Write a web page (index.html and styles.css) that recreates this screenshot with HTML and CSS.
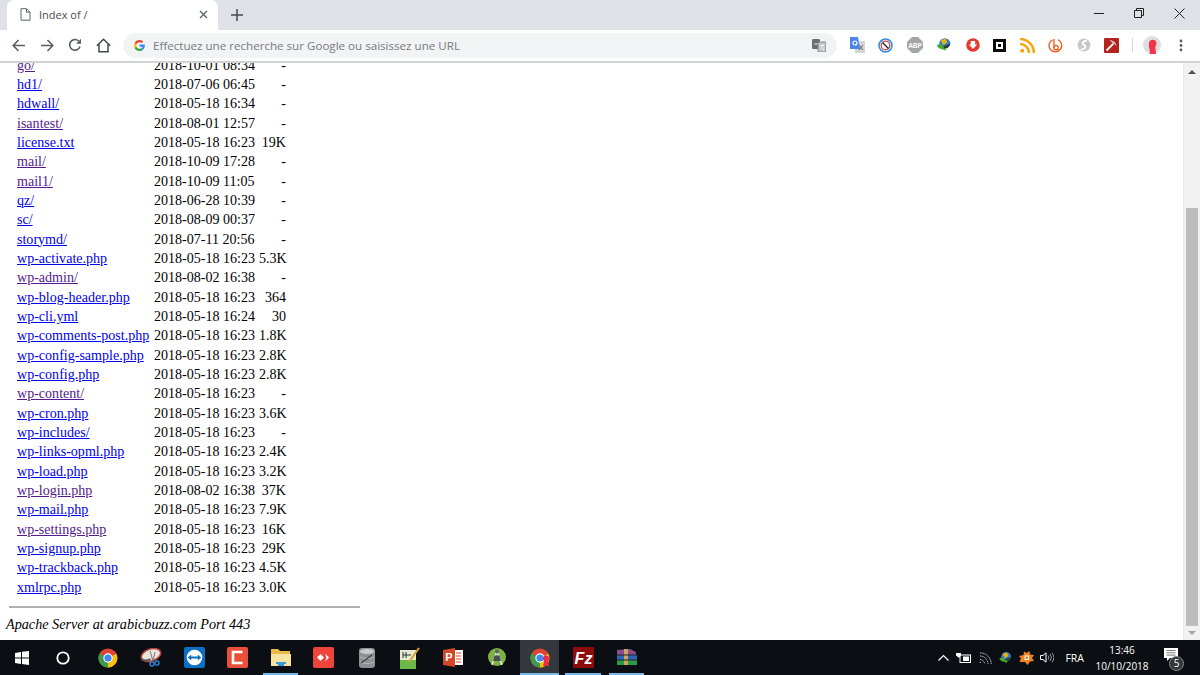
FILE: index.html
```html
<!DOCTYPE html>
<html lang="fr">
<head>
    <meta charset="UTF-8">
    <title>Index of /</title>
    <link rel="stylesheet" href="styles.css">
</head>
<body>
    <svg class="defs" width="0" height="0">
        <symbol id="chrome" viewBox="0 0 24 24">
            <circle cx="12" cy="12" r="11.5" fill="#db4437"/>
            <path d="M12 12 L22 7 A11.5 11.5 0 0 1 12 23.5 Z" fill="#f4c20d"/>
            <path d="M12 12 L12 23.5 A11.5 11.5 0 0 1 2.1 6.2 Z" fill="#3c9a4b"/>
            <circle cx="12" cy="12" r="5.6" fill="#fff"/>
            <circle cx="12" cy="12" r="4.3" fill="#4285f4"/>
        </symbol>
        <symbol id="globe" viewBox="0 0 20 20">
            <ellipse cx="11" cy="8" rx="7" ry="6.5" fill="#2f7fd0"/>
            <path d="M6 4 L12 2 L14 7 L9 10 Z" fill="#f0b400"/>
            <path d="M1 11 C4 8 7 9 9 12 L14 10 L12 17 L7 15 C5 15 3 14 1 11 Z" fill="#49a82e"/>
            <path d="M9 12 L18 8 L15 13 L11 14 Z" fill="#2c3b1c"/>
        </symbol>
    </svg>

    <header class="titlebar">
        <div class="tab">
            <svg class="tab-page" width="11" height="13" viewBox="0 0 11 13"><path d="M1 .7h5.5L10 4.2v8H1z M6.5 .7v3.5H10" fill="none" stroke="#5f6368"/></svg>
            <span class="tab-title">Index of /</span>
            <svg class="tab-close" width="9" height="9" viewBox="0 0 9 9"><path d="M1 1l7 7M8 1L1 8" stroke="#5f6368" stroke-width="1.4"/></svg>
        </div>
        <svg class="new-tab" width="12" height="12" viewBox="0 0 12 12"><path d="M6 0v12M0 6h12" stroke="#45494e" stroke-width="1.5"/></svg>
        <div class="window-buttons">
            <svg width="10" height="10" viewBox="0 0 10 10"><path d="M0 5.5h10" stroke="#222"/></svg>
            <svg width="10" height="10" viewBox="0 0 10 10"><path d="M.5 2.5h7v7h-7z M2.5 2.5v-2h7v7h-2" fill="none" stroke="#222"/></svg>
            <svg width="11" height="11" viewBox="0 0 11 11"><path d="M.5 .5l10 10M10.5 .5l-10 10" stroke="#222"/></svg>
        </div>
    </header>

    <nav class="toolbar">
        <div class="nav-buttons">
            <svg width="14" height="13" viewBox="0 0 14 13"><path d="M13 6.5H1.5M6.5 1L1.2 6.5 6.5 12" fill="none" stroke="#5a5e63" stroke-width="1.6"/></svg>
            <svg width="14" height="13" viewBox="0 0 14 13"><path d="M1 6.5h11.5M7.5 1l5.3 5.5L7.5 12" fill="none" stroke="#5a5e63" stroke-width="1.6"/></svg>
            <svg width="14" height="14" viewBox="0 0 14 14"><path d="M12 8.5A5.3 5.3 0 1 1 10.6 3" fill="none" stroke="#5a5e63" stroke-width="1.6"/><path d="M13 .8v4.9H8.1z" fill="#5a5e63"/></svg>
            <svg width="15" height="15" viewBox="0 0 15 15"><path d="M.8 7.8L7.5 1.2l6.7 6.6M3 6.2v7.6h9V6.2" fill="none" stroke="#45494e" stroke-width="1.5"/></svg>
        </div>
        <div class="omnibox">
            <svg class="g-logo" width="11" height="11" viewBox="0 0 24 24">
                <path d="M23.5 12.3c0-.9-.1-1.600-.2-2.300H12v4.500h6.500c-.3 1.500-1.100 2.700-2.400 3.500l3.700 2.900c2.200-2 3.700-5 3.700-8.600z" fill="#4285f4"/>
                <path d="M12 24c3.200 0 6-1.100 7.900-2.900l-3.800-2.900c-1 .7-2.400 1.100-4.100 1.100-3.200 0-5.800-2.100-6.800-5l-3.900 3C3.300 21.300 7.300 24 12 24z" fill="#34a853"/>
                <path d="M5.200 14.300a7.200 7.200 0 0 1 0-4.600l-3.900-3a12 12 0 0 0 0 10.600z" fill="#fbbc05"/>
                <path d="M12 4.700c1.800 0 3.300.6 4.600 1.800l3.400-3.400C17.900 1.200 15.200 0 12 0 7.300 0 3.300 2.700 1.300 6.700l3.900 3c1-2.900 3.600-5 6.800-5z" fill="#ea4335"/>
            </svg>
            <span class="omnibox-text">Effectuez une recherche sur Google ou saisissez une URL</span>
            <svg class="translate" width="14" height="13" viewBox="0 0 14 13"><rect width="8" height="10" rx="1" fill="#6b6f73"/><rect x="6" y="3" width="8" height="10" rx="1" fill="#c8cacc" stroke="#6b6f73" stroke-width=".8"/><path d="M2.500 5h3M8.500 6.500h3.500M10 8.500l1.500 2" stroke="#fff"/></svg>
        </div>
        <div class="extensions">
            <svg width="15" height="16" viewBox="0 0 15 16"><rect x="5" y="4" width="10" height="12" fill="#d4d5d6"/><path d="M9 8l4 5M13 8l-4 5" stroke="#666"/><path d="M0 0h8l2 12H0z" fill="#4a86e8"/><circle cx="5" cy="6" r="2" fill="none" stroke="#fff" stroke-width="1.200"/></svg>
            <svg width="15" height="15" viewBox="0 0 15 15"><circle cx="7.500" cy="7.500" r="6.500" fill="#fff" stroke="#2f8fe0" stroke-width="1.600"/><circle cx="7.500" cy="7.500" r="4.300" fill="none" stroke="#d0433b" stroke-width="1.300"/><path d="M4.500 4.500l6 6" stroke="#333" stroke-width="1.500"/></svg>
            <svg width="16" height="16" viewBox="0 0 16 16"><path d="M5 0h6l5 5v6l-5 5H5l-5-5V5z" fill="#a3a5a8"/><text x="8" y="10.500" class="abp-text">ABP</text></svg>
            <svg width="16" height="16"><use href="#globe"/></svg>
            <svg width="14" height="14" viewBox="0 0 14 14"><circle cx="7" cy="7" r="6.800" fill="#e23a2e"/><path d="M4.800 3h4.400v3.500h2L7 11 2.800 6.500h2z" fill="#fff"/></svg>
            <svg width="13" height="13" viewBox="0 0 13 13"><rect width="13" height="13" fill="#0b0b0b"/><rect x="3" y="3" width="7" height="7" fill="#fff"/><rect x="5" y="5" width="3" height="3" fill="#0b0b0b"/></svg>
            <svg width="15" height="15" viewBox="0 0 15 15"><circle cx="2.200" cy="12.800" r="2" fill="#f4a70e"/><path d="M0 6a9 9 0 0 1 9 9M0 1a14 14 0 0 1 14 14" fill="none" stroke="#f4a70e" stroke-width="2.600"/></svg>
            <svg width="15" height="15" viewBox="0 0 15 15"><path d="M4.500 1.800A6.300 6.300 0 1 0 10 1.700" fill="none" stroke="#ee6123" stroke-width="1.400"/><path d="M6 1v9" stroke="#ee6123" stroke-width="1.400"/><circle cx="8" cy="9.500" r="2.200" fill="none" stroke="#ee6123" stroke-width="1.300"/></svg>
            <svg width="14" height="14" viewBox="0 0 14 14"><circle cx="7" cy="7" r="6.500" fill="#c6c7c9"/><path d="M10 2.500C6 3 4 5.500 7 7s1 4.500-3 4.500" fill="none" stroke="#fff" stroke-width="1.800"/></svg>
            <svg width="15" height="15" viewBox="0 0 15 15"><rect width="15" height="15" rx="1" fill="#b3241e"/><path d="M2.500 12.500l7-7" stroke="#fff" stroke-width="1.800"/><path d="M5.500 2.500c3.500-.5 6.500 2 7 5.500L10.500 5.500z" fill="#fff"/></svg>
        </div>
        <span class="toolbar-divider"></span>
        <svg class="avatar" width="18" height="18" viewBox="0 0 18 18"><circle cx="9" cy="9" r="9" fill="#dddee0"/><path d="M6 7a3.800 3.800 0 0 1 7.500 0c0 2-1 3-1.200 4.500L13 18H6.500c.6-2 .5-4-.3-6C5.500 10.500 6 8.500 6 7z" fill="#f0344b"/></svg>
        <svg class="menu-dots" width="4" height="13" viewBox="0 0 4 13"><circle cx="2" cy="2" r="1.400" fill="#5a5e63"/><circle cx="2" cy="6.500" r="1.400" fill="#5a5e63"/><circle cx="2" cy="11" r="1.400" fill="#5a5e63"/></svg>
    </nav>

    <main class="viewport">
        <div class="page">
            <div class="listing">
                <div class="row"><a class="seen" href="#">go/</a><span>2018-10-01 08:34</span><span class="size">-</span></div>
                <div class="row"><a href="#">hd1/</a><span>2018-07-06 06:45</span><span class="size">-</span></div>
                <div class="row"><a href="#">hdwall/</a><span>2018-05-18 16:34</span><span class="size">-</span></div>
                <div class="row"><a class="seen" href="#">isantest/</a><span>2018-08-01 12:57</span><span class="size">-</span></div>
                <div class="row"><a href="#">license.txt</a><span>2018-05-18 16:23</span><span class="size">19K</span></div>
                <div class="row"><a class="seen" href="#">mail/</a><span>2018-10-09 17:28</span><span class="size">-</span></div>
                <div class="row"><a class="seen" href="#">mail1/</a><span>2018-10-09 11:05</span><span class="size">-</span></div>
                <div class="row"><a href="#">qz/</a><span>2018-06-28 10:39</span><span class="size">-</span></div>
                <div class="row"><a href="#">sc/</a><span>2018-08-09 00:37</span><span class="size">-</span></div>
                <div class="row"><a href="#">storymd/</a><span>2018-07-11 20:56</span><span class="size">-</span></div>
                <div class="row"><a href="#">wp-activate.php</a><span>2018-05-18 16:23</span><span class="size">5.3K</span></div>
                <div class="row"><a class="seen" href="#">wp-admin/</a><span>2018-08-02 16:38</span><span class="size">-</span></div>
                <div class="row"><a href="#">wp-blog-header.php</a><span>2018-05-18 16:23</span><span class="size">364</span></div>
                <div class="row"><a href="#">wp-cli.yml</a><span>2018-05-18 16:24</span><span class="size">30</span></div>
                <div class="row"><a href="#">wp-comments-post.php</a><span>2018-05-18 16:23</span><span class="size">1.8K</span></div>
                <div class="row"><a href="#">wp-config-sample.php</a><span>2018-05-18 16:23</span><span class="size">2.8K</span></div>
                <div class="row"><a href="#">wp-config.php</a><span>2018-05-18 16:23</span><span class="size">2.8K</span></div>
                <div class="row"><a class="seen" href="#">wp-content/</a><span>2018-05-18 16:23</span><span class="size">-</span></div>
                <div class="row"><a href="#">wp-cron.php</a><span>2018-05-18 16:23</span><span class="size">3.6K</span></div>
                <div class="row"><a href="#">wp-includes/</a><span>2018-05-18 16:23</span><span class="size">-</span></div>
                <div class="row"><a href="#">wp-links-opml.php</a><span>2018-05-18 16:23</span><span class="size">2.4K</span></div>
                <div class="row"><a href="#">wp-load.php</a><span>2018-05-18 16:23</span><span class="size">3.2K</span></div>
                <div class="row"><a class="seen" href="#">wp-login.php</a><span>2018-08-02 16:38</span><span class="size">37K</span></div>
                <div class="row"><a href="#">wp-mail.php</a><span>2018-05-18 16:23</span><span class="size">7.9K</span></div>
                <div class="row"><a class="seen" href="#">wp-settings.php</a><span>2018-05-18 16:23</span><span class="size">16K</span></div>
                <div class="row"><a href="#">wp-signup.php</a><span>2018-05-18 16:23</span><span class="size">29K</span></div>
                <div class="row"><a href="#">wp-trackback.php</a><span>2018-05-18 16:23</span><span class="size">4.5K</span></div>
                <div class="row"><a href="#">xmlrpc.php</a><span>2018-05-18 16:23</span><span class="size">3.0K</span></div>
            </div>
            <hr class="rule">
            <address class="signature">Apache Server at arabicbuzz.com Port 443</address>
        </div>
        <div class="scrollbar">
            <span class="arrow-up"></span>
            <span class="thumb"></span>
            <span class="arrow-down"></span>
        </div>
    </main>

    <footer class="taskbar">
        <div class="task">
            <svg width="14" height="14" viewBox="0 0 14 14"><path d="M0 2l6-1v5.500H0zM7 .8L14 0v6.500H7zM0 7.500h6V13l-6-1zM7 7.500h7V14l-7-1z" fill="#fff"/></svg>
        </div>
        <div class="task">
            <svg class="cortana" width="14" height="14" viewBox="0 0 14 14"><circle cx="7" cy="7" r="5.700" fill="none" stroke="#fff" stroke-width="1.800"/></svg>
        </div>
        <div class="task"><svg width="20" height="20"><use href="#chrome"/></svg></div>
        <div class="task">
            <svg width="22" height="20" viewBox="0 0 22 20"><ellipse cx="11" cy="7" rx="10" ry="6" transform="rotate(-18 11 7)" fill="#e9e4dc" stroke="#b5413a" stroke-width="1.500"/><path d="M1.500 11c2 2 6 2 9 0" stroke="#555" stroke-width="2" fill="none"/><path d="M10 3l3 10M15 4l-2 9" stroke="#777"/><circle cx="12" cy="16" r="2" fill="none" stroke="#2b7fd0" stroke-width="1.500"/><circle cx="17" cy="15" r="2" fill="none" stroke="#2b7fd0" stroke-width="1.500"/></svg>
        </div>
        <div class="task">
            <svg width="21" height="21" viewBox="0 0 21 21"><rect width="21" height="21" rx="2" fill="#0c6fc4"/><circle cx="10.500" cy="10.500" r="7.800" fill="#fff"/><path d="M3.800 10.500l3.400-3v2h6.600v-2l3.400 3-3.400 3v-2H7.200v2z" fill="#0c6fc4"/></svg>
        </div>
        <div class="task">
            <svg width="21" height="21" viewBox="0 0 21 21"><rect width="21" height="21" rx="2" fill="#e8503a"/><path d="M15.500 5H6v11h9.500" fill="none" stroke="#fff" stroke-width="2.600"/></svg>
        </div>
        <div class="task task-open">
            <svg width="20" height="19" viewBox="0 0 20 19"><path d="M0 1h7l2 2h10v15H0z" fill="#e9b949"/><rect x="0" y="6" width="20" height="12" fill="#f6e3a0"/><path d="M7 18v-4h6v4z" fill="#3b9ad9"/><path d="M5 14h10v2H5z" fill="#3b9ad9"/></svg>
        </div>
        <div class="task">
            <svg width="21" height="21" viewBox="0 0 21 21"><rect width="21" height="21" rx="2" fill="#ef443b"/><path d="M7.500 7l3.500 3.500L7.500 14 4 10.500z" fill="#fff"/><path d="M12 6.500l4 4-4 4 1.500-4z" fill="#fff"/></svg>
        </div>
        <div class="task">
            <svg width="16" height="20" viewBox="0 0 16 20"><rect width="16" height="20" rx="3" fill="#8e9193"/><ellipse cx="8" cy="3.500" rx="7" ry="2.500" fill="#c9cbcc"/><path d="M1 9c4 2 10 2 14 0M1 14c4 2 10 2 14 0" fill="none" stroke="#b9bbbc"/><path d="M2 15L13 7" stroke="#3d4042" stroke-width="1.300"/></svg>
        </div>
        <div class="task">
            <svg width="20" height="22" viewBox="0 0 20 22"><rect y="3" width="16" height="19" fill="#e4ebd0"/><rect y="13" width="16" height="9" fill="#6ab845"/><path d="M3 5v6M6 5v6M3 8h8" stroke="#333"/><path d="M9 15L19 1" stroke="#e0a030" stroke-width="2"/></svg>
        </div>
        <div class="task">
            <svg width="20" height="19" viewBox="0 0 20 19"><rect x="8" y="2" width="12" height="15" fill="#fff"/><path d="M13 5h5M13 8h5M13 11h5M13 14h5" stroke="#d24726"/><path d="M0 2l12-2v19L0 17z" fill="#d24726"/><text x="6" y="13" class="ppt-text">P</text></svg>
        </div>
        <div class="task">
            <svg width="18" height="20" viewBox="0 0 18 20"><circle cx="9" cy="9" r="9" fill="#7cb342"/><path d="M9 3l5 14M9 3L4 17" stroke="#e8ecef" stroke-width="1.500"/><path d="M6.500 7.500h5L13 13H5z" fill="#4a4f52"/><circle cx="9" cy="3.500" r="2" fill="#5d6366"/></svg>
        </div>
        <div class="task task-active">
            <svg width="20" height="20"><use href="#chrome"/></svg>
            <svg class="chrome-badge" width="8" height="11" viewBox="0 0 8 11"><path d="M1 3.500a3 3 0 0 1 6 0c0 1.500-1 2-1 3.500l1 4H1l1-4C2 5.500 1 5 1 3.500z" fill="#f0294a"/></svg>
        </div>
        <div class="task task-open">
            <svg width="21" height="21" viewBox="0 0 21 21"><rect width="21" height="21" fill="#8f0b0b"/><text x="10.500" y="16.500" class="fz-text">Fz</text></svg>
        </div>
        <div class="task task-open">
            <svg width="21" height="17" viewBox="0 0 21 17"><path d="M1 1l13-1 6 3v3H1z" fill="#8b4a8c"/><path d="M1 6h20v5H1z" fill="#2b66b8"/><path d="M1 11h20v5H1z" fill="#2c9a4b"/><path d="M8 0h4v16H8z" fill="#c9a75e"/><path d="M1 6h20M1 11h20" stroke="#222"/></svg>
        </div>

        <div class="tray">
            <svg class="tray-icon tray-chevron" width="11" height="7" viewBox="0 0 11 7"><path d="M.5 6.500l5-5 5 5" fill="none" stroke="#fff" stroke-width="1.200"/></svg>
            <svg class="tray-icon tray-battery" width="15" height="11" viewBox="0 0 15 11"><rect x="4" y="3" width="10.500" height="7.500" fill="none" stroke="#fff"/><rect x="7" y="4.500" width="6" height="4.500" fill="#fff"/><path d="M0 1h5v2.500L3.500 5.500h-1L0 3.500z" fill="#fff"/></svg>
            <svg class="tray-icon" width="13" height="12" viewBox="0 0 13 12"><path d="M1 11a1 1 0 0 1 1-1M1 7.500A4.500 4.500 0 0 1 5.500 12M1 4a8 8 0 0 1 8 8M1 .8A11.200 11.200 0 0 1 12.200 12" fill="none" stroke="#ccc" stroke-dasharray="1.500 .8"/></svg>
            <svg class="tray-icon" width="15" height="14"><use href="#globe"/></svg>
            <svg class="tray-icon" width="15" height="14" viewBox="0 0 15 14"><path d="M7.500 2l3-2 .5 3.500 4 .5-2 3 2 3-4 .5-2.500 3.500-2.500-3L.5 11l1.500-3.500L0 5l4.500-1L5 .5z" fill="#f5811f"/><rect x="6" y="5" width="3.500" height="3.500" fill="none" stroke="#fff"/></svg>
            <svg class="tray-icon" width="14" height="11" viewBox="0 0 14 11"><path d="M.5 3.500h2.500L6 .8v9.400L3 7.500H.5z" fill="none" stroke="#fff"/><path d="M8 3.500a3 3 0 0 1 0 4M10 2a5.500 5.500 0 0 1 0 7M12 .8a7.500 7.500 0 0 1 0 9.400" fill="none" stroke="#bbb" stroke-width=".8"/></svg>
            <span class="tray-lang">FRA</span>
            <div class="tray-clock">
                <span>13:46</span>
                <span>10/10/2018</span>
            </div>
            <div class="notify">
                <svg width="14" height="14" viewBox="0 0 14 14"><path d="M0 0h14v10H6L3 13v-3H0z" fill="#fff"/><path d="M2.500 2.500h9M2.500 4.800h9M2.500 7.100h9" stroke="#555" stroke-width=".8"/></svg>
                <span class="notify-badge">5</span>
            </div>
        </div>
    </footer>
</body>
</html>
```

FILE: styles.css
```css
* {
    box-sizing: border-box;
}

html, body {
    height: 100%;
}

body {
    margin: 0;
    display: flex;
    flex-direction: column;
    height: 675px;
    overflow: hidden;
    background: white;
    font-family: "Liberation Serif", serif;
}

.defs {
    position: absolute;
}

/* browser chrome */
.titlebar {
    display: flex;
    align-items: flex-end;
    height: 30px;
    padding-left: 7px;
    background: #dee1e6;
}

.tab {
    display: flex;
    align-items: center;
    width: 211px;
    height: 30px;
    padding: 0 10px 2px 13px;
    background: white;
    border-radius: 7px 7px 0 0;
}

.tab-title {
    flex: 1;
    margin-left: 8px;
    font-family: "Open Sans", sans-serif;
    font-size: 11px;
    color: #4a4d51;
}

.new-tab {
    margin: 0 0 9px 13px;
}

.window-buttons {
    display: flex;
    align-items: center;
    gap: 30px;
    margin-left: auto;
    height: 26px;
    padding-right: 15px;
    align-self: flex-start;
}

.toolbar {
    display: flex;
    align-items: center;
    height: 33px;
    padding: 0 0 1px 12px;
    background: white;
    border-bottom: 2px solid #d2d3d5;
}

.nav-buttons {
    display: flex;
    align-items: center;
    gap: 14px;
    width: 111px;
}

.omnibox {
    display: flex;
    align-items: center;
    width: 714px;
    height: 25px;
    padding: 0 11px 0 11px;
    background: #f1f3f4;
    border-radius: 13px;
}

.omnibox-text {
    flex: 1;
    margin-left: 8px;
    font-family: "Open Sans", sans-serif;
    font-size: 11.6px;
    color: #777b80;
}

.extensions {
    display: flex;
    align-items: center;
    justify-content: space-between;
    width: 269px;
    margin-left: 13px;
}

.abp-text {
    font-family: "Liberation Sans", sans-serif;
    font-size: 6.5px;
    font-weight: bold;
    fill: white;
    text-anchor: middle;
}

.toolbar-divider {
    width: 1px;
    height: 14px;
    margin-left: 13px;
    background: #d5d6d8;
}

.avatar {
    margin-left: 10px;
}

.menu-dots {
    margin-left: 18px;
}

/* page */
.viewport {
    flex: 1;
    display: flex;
    min-height: 0;
    overflow: hidden;
}

.page {
    flex: 1;
    padding: 0 0 0 6px;
    color: black;
    font-size: 14.05px;
}

.listing {
    margin-top: -7.5px;
}

.row {
    display: grid;
    grid-template-columns: 148px 105px 27px;
    align-items: center;
    height: 19.35px;
    line-height: 19.35px;
    white-space: nowrap;
}

.row a {
    margin-left: 11px;
    justify-self: start;
    color: #0000ee;
}

.row a.seen {
    color: #551a8b;
}

.size {
    text-align: right;
}

.rule {
    width: 351px;
    height: 2px;
    margin: 9px 0 0 3px;
    border: 0;
    background: #b0b0b0;
}

.signature {
    margin-top: 7px;
    font-size: 14.2px;
    line-height: 19px;
}

.scrollbar {
    display: flex;
    flex-direction: column;
    align-items: center;
    width: 17px;
    padding: 7px 2px 5px;
    background: #f1f1f1;
    border-left: 1px solid #e9e9e9;
}

.arrow-up {
    width: 0;
    height: 0;
    border: 4px solid transparent;
    border-top: 0;
    border-bottom: 4px solid #505050;
}

.arrow-down {
    width: 0;
    height: 0;
    margin-top: 5px;
    border: 4px solid transparent;
    border-bottom: 0;
    border-top: 4px solid #a3a3a3;
}

.thumb {
    width: 100%;
    flex: 1;
    margin-top: 134px;
    background: #bdbdbd;
}

/* windows taskbar */
.taskbar {
    display: flex;
    align-items: stretch;
    height: 35px;
    background: #0b0f14;
    color: white;
}

.task {
    position: relative;
    display: flex;
    align-items: center;
    justify-content: center;
    width: 43.2px;
    border-bottom: 2px solid transparent;
    padding-top: 2px;
}

.task-open {
    margin: 0 4px;
    width: 35.2px;
    border-bottom-color: #76b9ed;
}

.task-active {
    margin: 0 2px;
    width: 39.2px;
    border-bottom-color: #76b9ed;
    background: #34383c;
}

.cortana {
    margin-right: 3px;
}

.chrome-badge {
    position: absolute;
    left: 22px;
    top: 15px;
}

.ppt-text {
    font-family: "Liberation Sans", sans-serif;
    font-size: 11px;
    font-weight: bold;
    fill: white;
    text-anchor: middle;
}

.fz-text {
    font-family: "Liberation Sans", sans-serif;
    font-size: 16px;
    font-weight: bold;
    font-style: italic;
    fill: white;
    text-anchor: middle;
}

.tray {
    display: flex;
    align-items: center;
    margin-left: auto;
    padding-right: 16px;
    font-family: "Open Sans", sans-serif;
    font-size: 10px;
}

.tray-icon {
    margin-right: 6px;
}

.tray-chevron {
    margin-right: 7px;
}

.tray-battery {
    margin-right: 8px;
}

.tray-lang {
    margin-left: 5px;
    font-size: 10.5px;
}

.tray-clock {
    display: flex;
    flex-direction: column;
    align-items: center;
    width: 60px;
    margin-left: 8px;
    line-height: 16px;
}

.notify {
    position: relative;
    width: 27px;
    height: 28px;
    margin-left: 5px;
    padding: 4px 0 0 7px;
}

.notify-badge {
    position: absolute;
    left: 12px;
    top: 12px;
    width: 15px;
    height: 15px;
    border: 1px solid #888;
    border-radius: 50%;
    background: #33373b;
    font-size: 10px;
    line-height: 13px;
    text-align: center;
}
```
